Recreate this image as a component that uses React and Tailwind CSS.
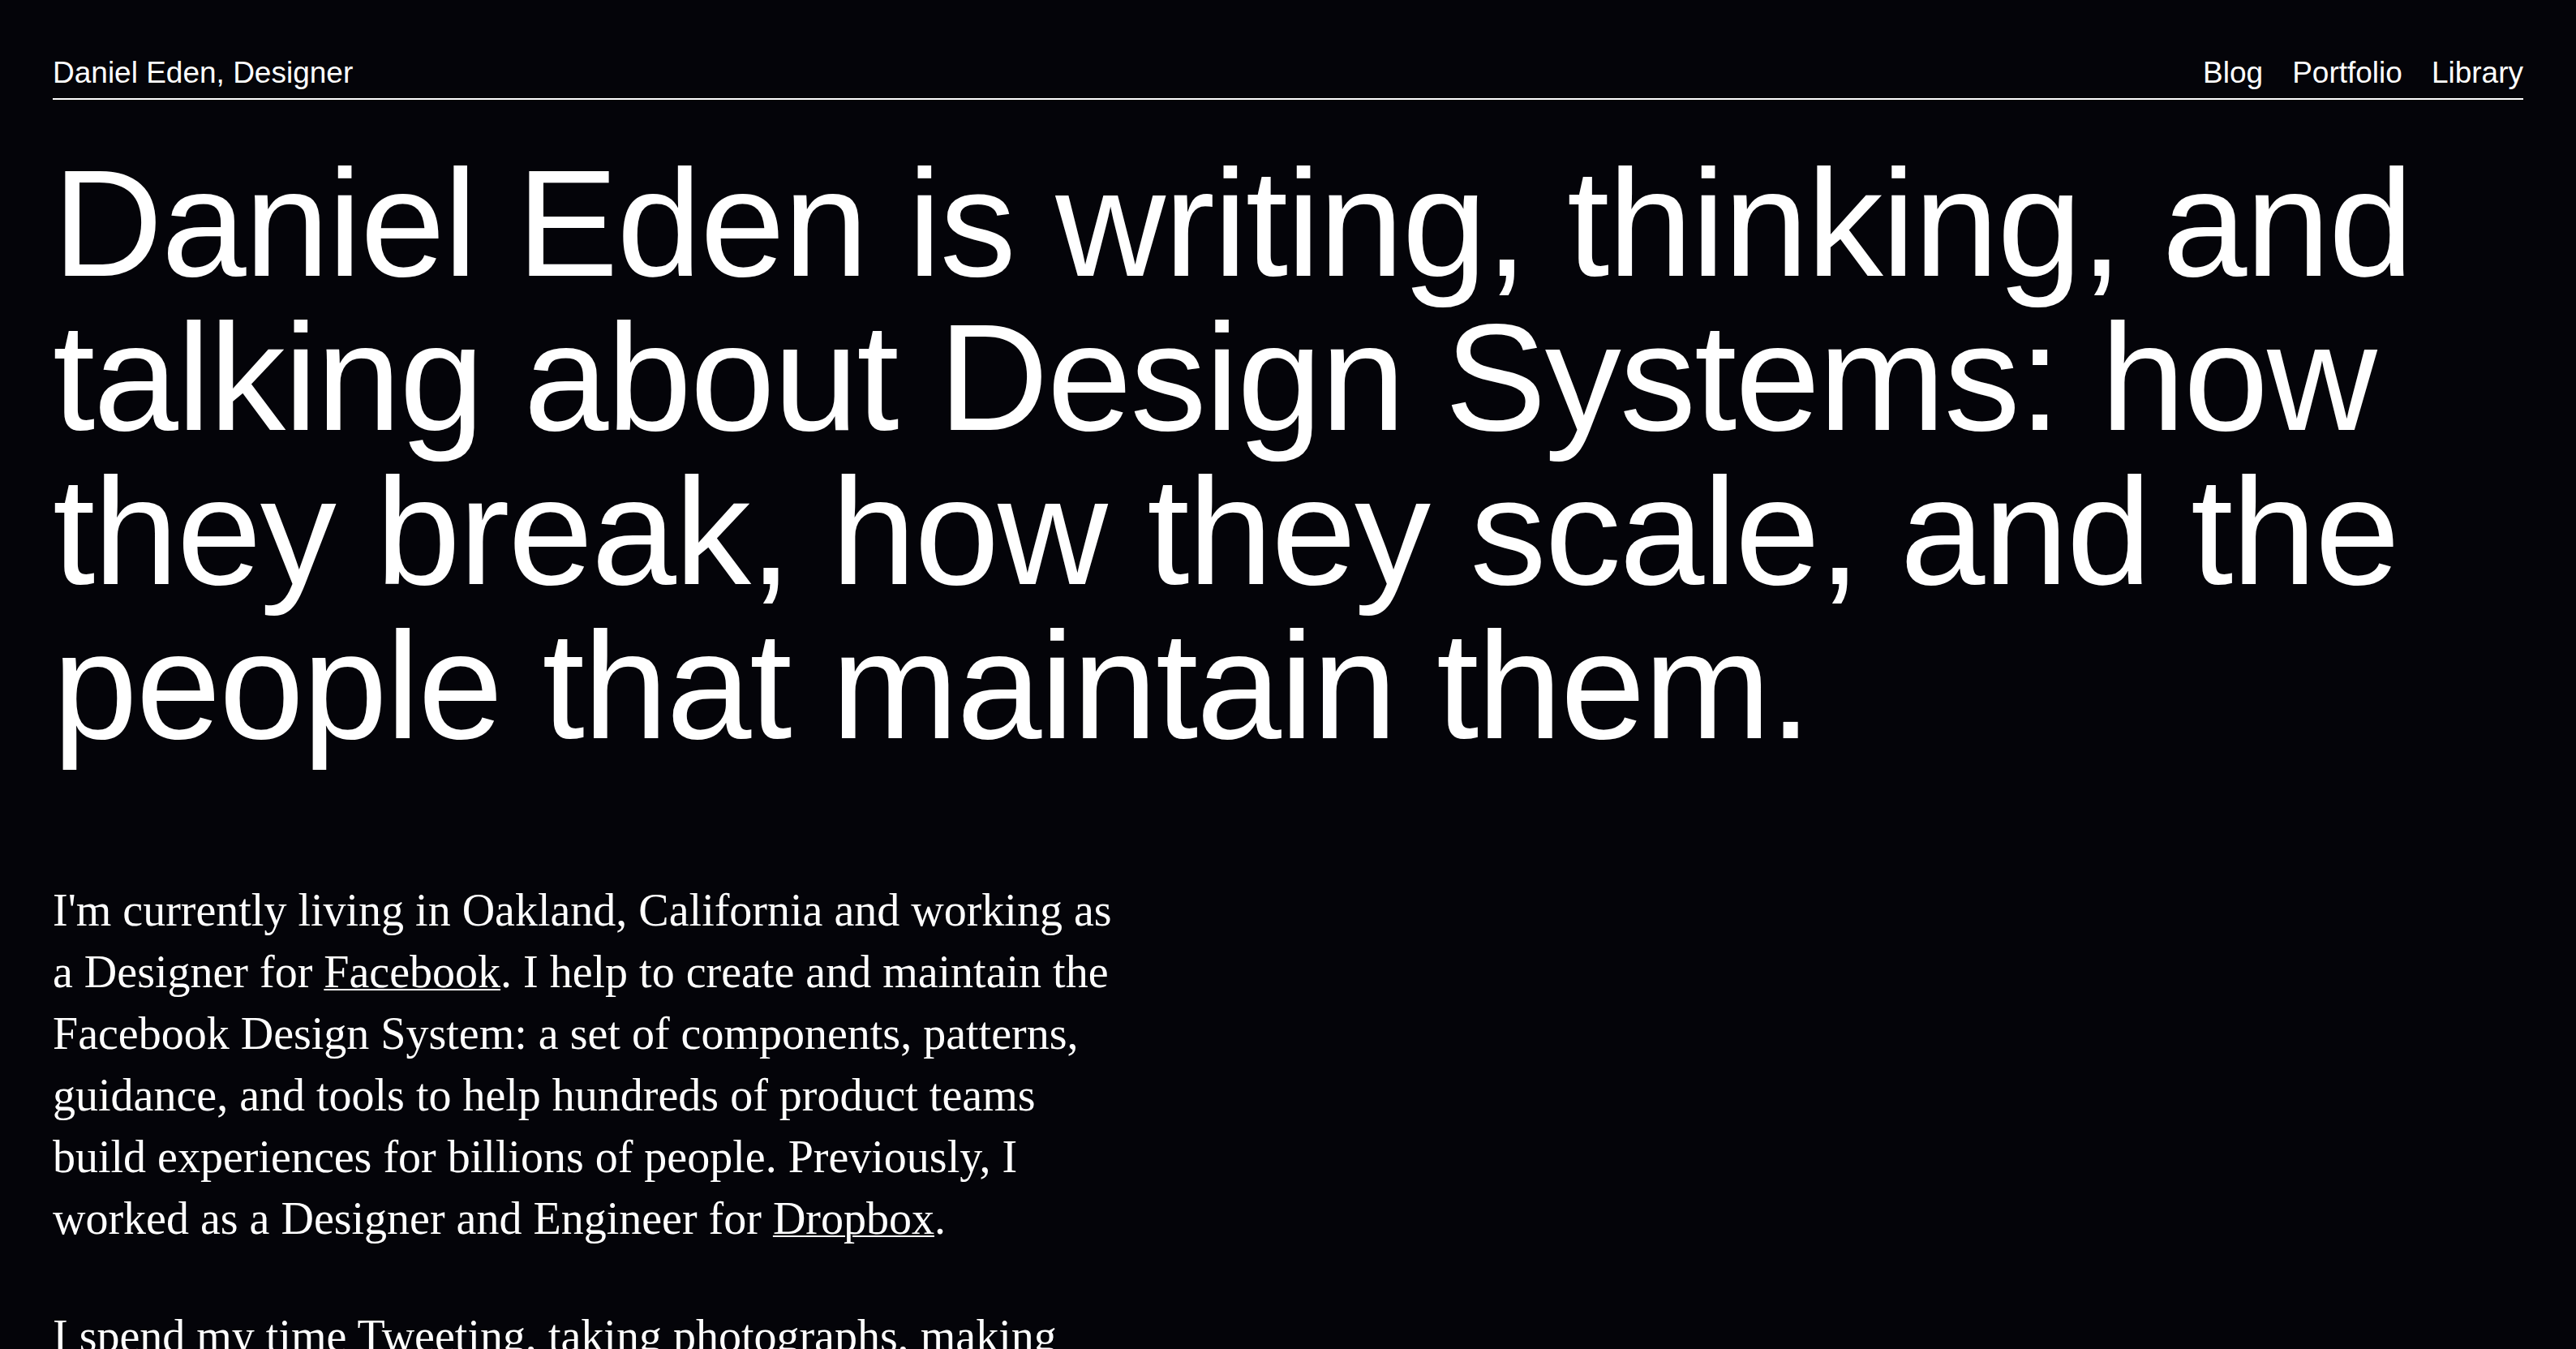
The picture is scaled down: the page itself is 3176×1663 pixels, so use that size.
export default function App() {
  return (
    <div className="min-h-screen w-full bg-[#040409] text-white">
      <div className="px-[65px] pb-[200px]">
        <header className="flex items-baseline justify-between border-b-2 border-white pt-[68px] pb-[10px] font-['Liberation_Sans',Arial,sans-serif] text-[37px] leading-[43px]">
          <a href="#" className="text-white">Daniel Eden, Designer</a>
          <nav className="flex gap-[36px]">
            <a href="#">Blog</a>
            <a href="#">Portfolio</a>
            <a href="#">Library</a>
          </nav>
        </header>

        <h1 className="mt-[57px] font-['Liberation_Sans',Arial,sans-serif] text-[188px] font-normal leading-[190px] tracking-[-0.01em]">
          Daniel Eden is writing, thinking, and talking about Design Systems: how they break, how they scale, and the people that maintain them.
        </h1>

        <div className="mt-[144px] max-w-[1325px] font-['Liberation_Serif','Times_New_Roman',serif] text-[56px] leading-[76px]">
          <p className="mb-[69px]">
            I'm currently living in Oakland, California and working as a Designer for{" "}
            <a href="#" className="underline decoration-2 underline-offset-2">Facebook</a>. I help to create and maintain the Facebook Design System: a set of components, patterns, guidance, and tools to help hundreds of product teams build experiences for billions of people. Previously, I worked as a Designer and Engineer for{" "}
            <a href="#" className="underline decoration-2 underline-offset-2">Dropbox</a>.
          </p>
          <p>
            I spend my time Tweeting, taking photographs, making things for the web, and writing about design, code, and the people behind them.
          </p>
        </div>
      </div>
    </div>
  );
}
